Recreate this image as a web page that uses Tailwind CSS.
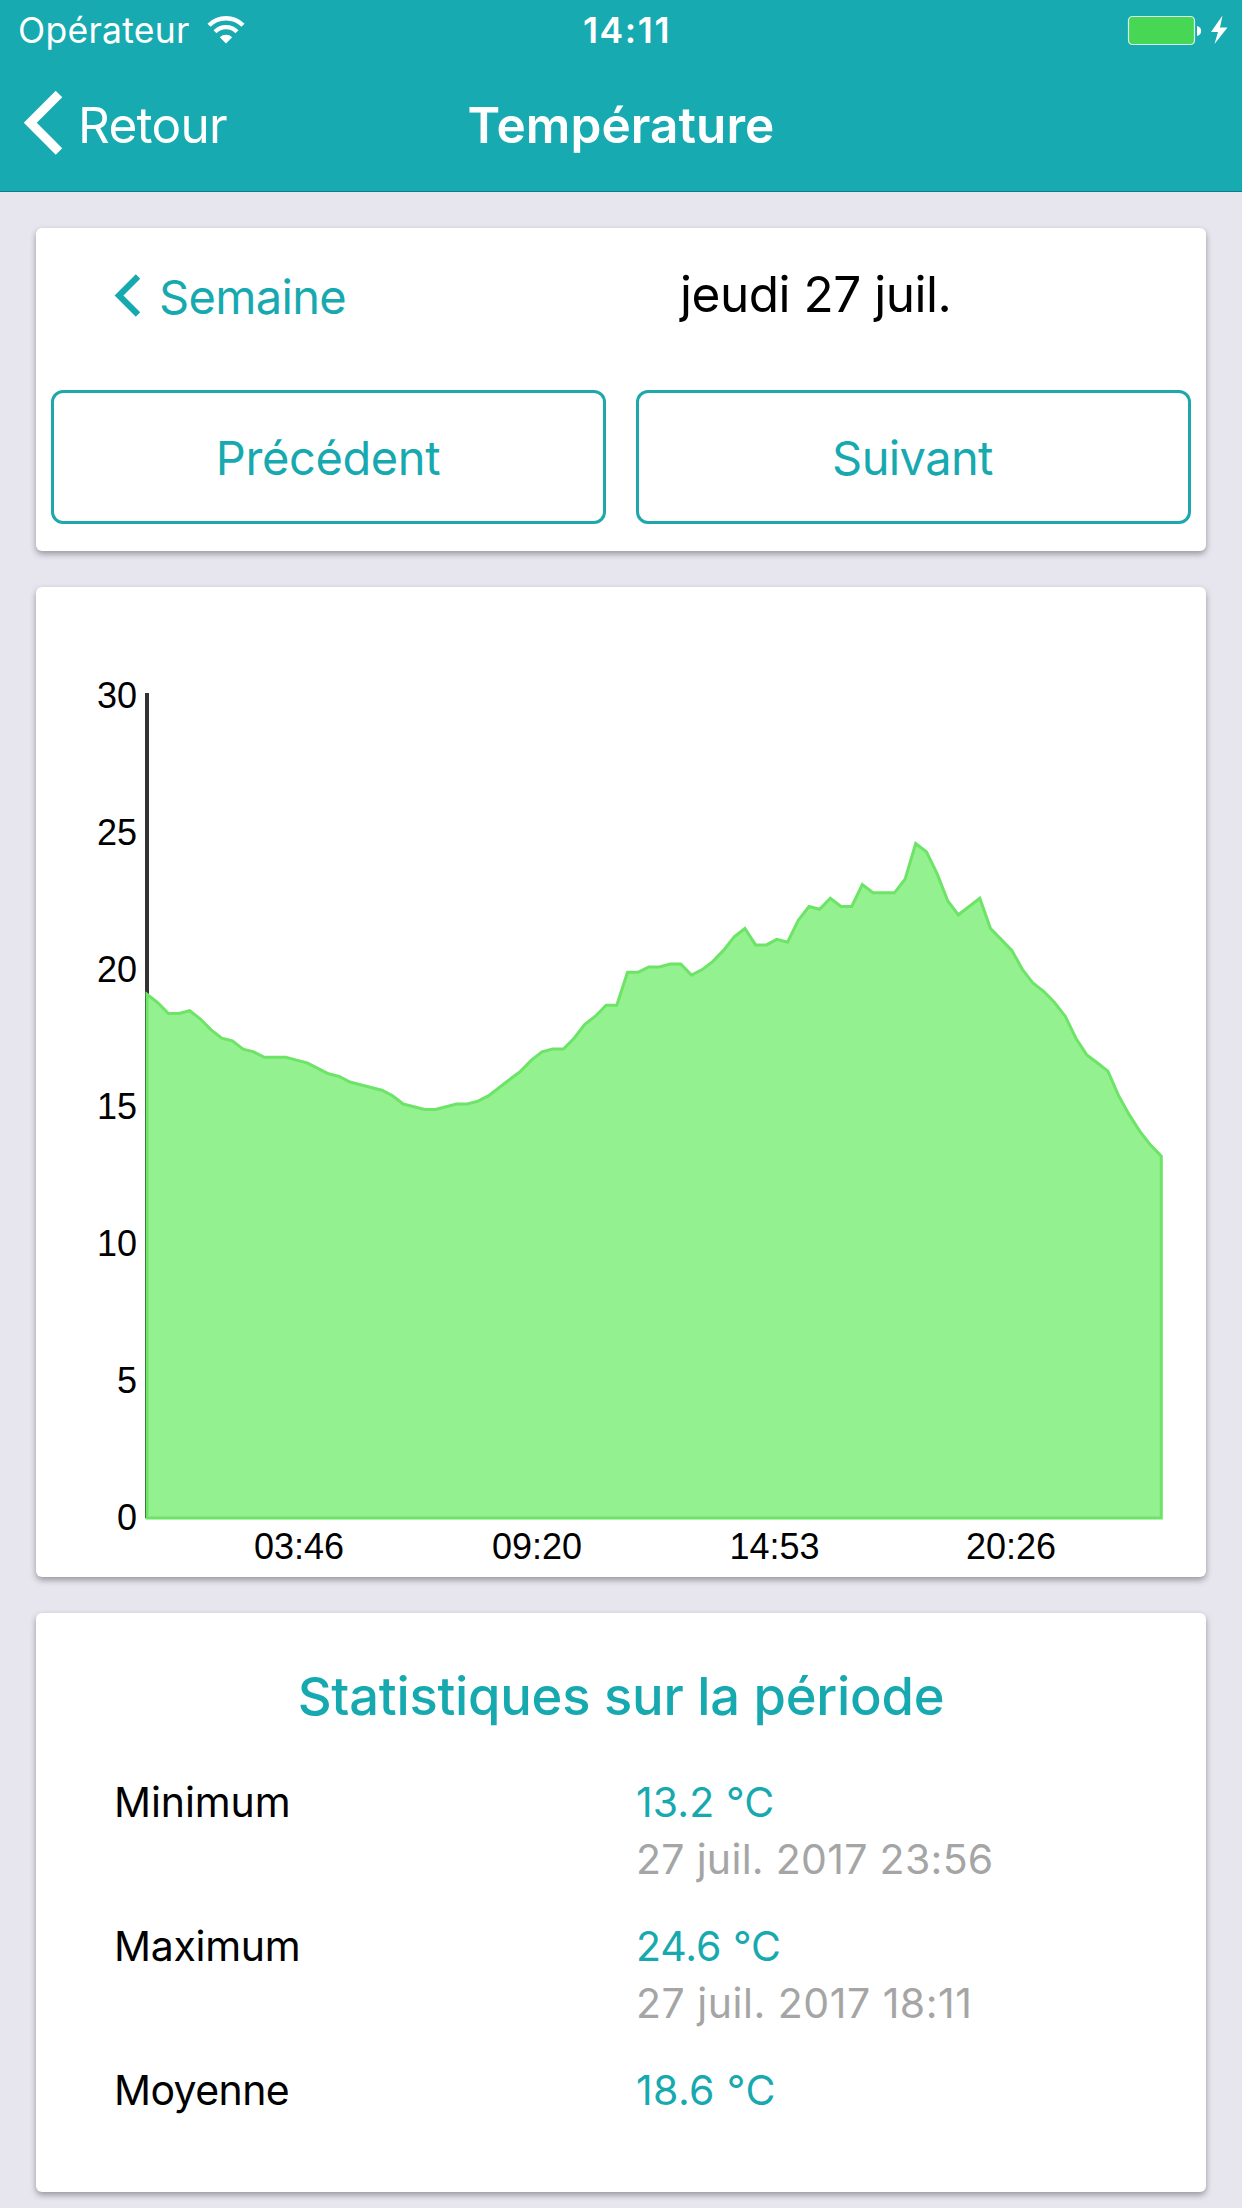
<!DOCTYPE html>
<html lang="fr">
<head>
<meta charset="utf-8">
<title>Température</title>
<script src="https://cdn.jsdelivr.net/npm/@tailwindcss/browser@4"></script>
</head>
<body class="w-[1242px] h-[2208px] overflow-hidden bg-[#e7e6ef] font-['Inter',sans-serif] text-black">
<header class="h-[192px] bg-[#17aab1] border-b border-[#0e7a86] text-white">
  <!-- status bar -->
  <div class="grid grid-cols-3 items-center h-[62px] text-[35.5px]/[62px]">
    <div class="flex items-center pl-[18px]">
      <span class="tracking-[0.27px]">Opérateur</span>
      <svg class="ml-[17px] mb-[3px] w-[38px] h-[28px]" viewBox="0 0 38 28" fill="none" stroke="#fff">
        <path d="M2 9.3A24 24 0 0 1 36 9.3" stroke-width="4.4"/>
        <path d="M8 15.8A15.5 15.5 0 0 1 30 15.8" stroke-width="4.2"/>
        <path d="M19 27.5L12.8 21.2A9 9 0 0 1 25.2 21.2Z" fill="#fff" stroke="none"/>
      </svg>
    </div>
    <div class="text-center pl-[12px] font-semibold tracking-[1.63px]">14:11</div>
    <div class="flex items-center justify-end pr-[14px]">
      <svg class="mb-[2px] w-[102px] h-[32px]" viewBox="1126 14 102 32">
        <rect x="1128.5" y="16.5" width="66" height="28" rx="4" fill="#47d755" stroke="#d4f5ee" stroke-width="1.2"/>
        <path d="M1197 26c5.500 1 5.500 9 0 10Z" fill="#fff"/>
        <path d="M1222.500 15.500L1211 32h7l-3.500 12L1227.500 27.500h-7.500Z" fill="#fff"/>
      </svg>
    </div>
  </div>
  <!-- navigation bar -->
  <nav class="grid grid-cols-3 items-center h-[126px] text-[49.5px]/[60px]">
    <div class="flex items-center">
      <svg class="ml-[22px] mt-[-4px] w-[42px] h-[66px]" viewBox="22 90 42 66" fill="none" stroke="#fff" stroke-width="9.200"><path d="M59 94L30.300 122.800L59 151.500"/></svg>
      <span class="ml-[14px] tracking-[-0.73px]">Retour</span>
    </div>
    <h1 class="text-center font-semibold tracking-[0.07px]">Température</h1>
  </nav>
</header>

<main class="flex flex-col gap-[36px] px-[36px] pt-[36px]">
  <section class="h-[323px] rounded-[6px] bg-white shadow-[0_3px_6px_rgba(0,0,0,0.35)]">
    <div class="flex h-[162px]">
      <div class="flex items-center w-[608px] h-[138px] pl-[77px] text-[47px] text-[#16a9af]">
        <svg class="mb-[4px] w-[30px] h-[44px]" viewBox="113 273 30 44" fill="none" stroke="currentColor" stroke-width="6.200"><path d="M138 276.500L119 295.500L138 314.500"/></svg>
        <span class="ml-[16px] tracking-[-0.65px]">Semaine</span>
      </div>
      <div class="flex items-center h-[133px] pl-[36px] text-[49.5px] tracking-[-0.48px]">jeudi 27 juil.</div>
    </div>
    <div class="grid grid-cols-2 gap-[30px] px-[15px] text-[47px] text-[#16a9af]">
      <button class="h-[134px] pt-[2px] pr-px rounded-[12px] border-3 border-[#1fa8ab] tracking-[-0.4px]">Précédent</button>
      <button class="h-[134px] pt-[2px] pr-[2px] rounded-[12px] border-3 border-[#1fa8ab] tracking-[-0.61px]">Suivant</button>
    </div>
  </section>

  <section class="h-[990px] rounded-[6px] bg-white shadow-[0_3px_6px_rgba(0,0,0,0.35)]">
    <svg class="block w-[1170px] h-[990px] font-['Liberation_Sans',sans-serif] text-[36px]" viewBox="36 587 1170 990">
      <path d="M147 693V1518" stroke="#333" stroke-width="4"/>
      <path id="area" fill="#94f18f" stroke="#6de468" stroke-width="3"/>
      <path d="M145.500 996V1518" stroke="#3c7a3a" stroke-width="1"/>
      <g id="ticks-y" text-anchor="end"></g>
      <g text-anchor="middle">
        <text x="299" y="1559">03:46</text>
        <text x="537" y="1559">09:20</text>
        <text x="774.500" y="1559">14:53</text>
        <text x="1011" y="1559">20:26</text>
      </g>
    </svg>
  </section>

  <section class="h-[579px] rounded-[6px] bg-white shadow-[0_3px_6px_rgba(0,0,0,0.35)] pt-[46px]">
    <h2 class="mb-[41px] text-center text-[52.5px]/[74px] font-medium tracking-[-0.24px] text-[#16a9af]">Statistiques sur la période</h2>
    <dl class="grid grid-cols-[522px_1fr] gap-y-[30px] pl-[78px] text-[41px]/[57px]">
      <dt class="tracking-[-0.1px]">Minimum</dt>
      <dd>
        <div class="tracking-[0.1px] text-[#16a9af]">13.2 °C</div>
        <div class="tracking-[0.3px] text-[#a5a5a5]">27 juil. 2017 23:56</div>
      </dd>
      <dt class="tracking-[-0.3px]">Maximum</dt>
      <dd>
        <div class="tracking-[-0.05px] text-[#16a9af]">24.6 °C</div>
        <div class="tracking-[0.52px] text-[#a5a5a5]">27 juil. 2017 18:11</div>
      </dd>
      <dt class="tracking-[-0.6px]">Moyenne</dt>
      <dd class="tracking-[0.4px] text-[#16a9af]">18.6 °C</dd>
    </dl>
  </section>
</main>
<script>
  // One reading every quarter hour, in °C
  const temps = [19.1,18.8,18.4,18.4,18.5,18.2,17.8,17.5,17.4,17.1,17.0,16.8,16.8,16.8,16.7,16.6,16.4,16.2,16.1,15.9,15.8,15.7,15.6,15.4,15.1,15.0,14.9,14.9,15.0,15.1,15.1,15.2,15.4,15.7,16.0,16.3,16.7,17.0,17.1,17.1,17.5,18.0,18.3,18.7,18.7,19.9,19.9,20.1,20.1,20.2,20.2,19.8,20.0,20.3,20.7,21.2,21.5,20.9,20.9,21.1,21.0,21.8,22.3,22.2,22.6,22.3,22.3,23.1,22.8,22.8,22.8,23.3,24.6,24.3,23.5,22.5,22.0,22.3,22.6,21.5,21.1,20.7,20.0,19.5,19.2,18.8,18.3,17.5,16.9,16.6,16.3,15.4,14.7,14.1,13.6,13.2];
  const x = i => 147 + i * 1014.3 / 95, y = t => 1518 - t * 27.42;
  document.getElementById('area').setAttribute('d',
    'M147 1518' + temps.map((t, i) => `L${x(i).toFixed(1)} ${y(t).toFixed(1)}`).join('') + `L${x(95)} 1518Z`);
  const ticks = document.getElementById('ticks-y');
  for (let v = 0; v <= 30; v += 5) {
    const t = document.createElementNS('http://www.w3.org/2000/svg', 'text');
    t.setAttribute('x', 137);
    t.setAttribute('y', 1530 - v * 27.4);
    t.textContent = v;
    ticks.append(t);
  }
</script>
</body>
</html>
